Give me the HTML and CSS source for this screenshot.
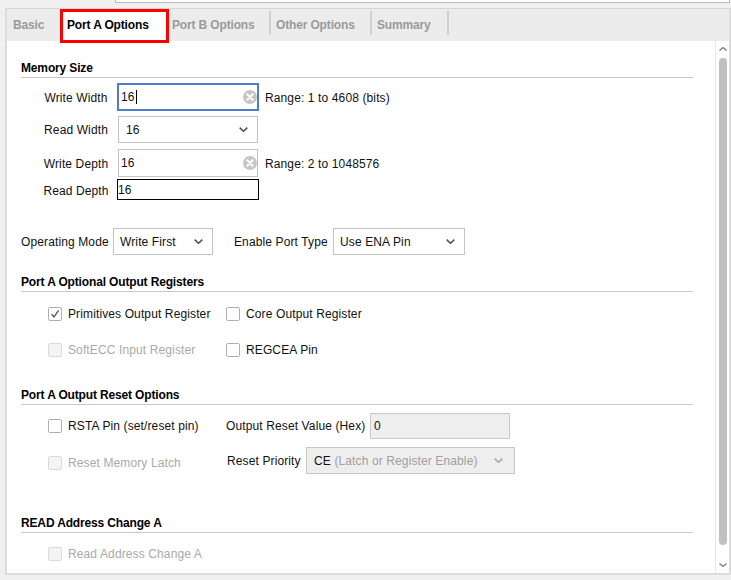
FILE: index.html
```html
<!DOCTYPE html>
<html>
<head>
<meta charset="utf-8">
<link rel="stylesheet" href="styles.css">
</head>
<body>
<div class="topstrip"></div>
<div class="panel">
  <div class="tabbar">
    <div class="tab tab-basic">Basic</div>
    <div class="tab tab-active">Port A Options</div>
    <div class="tab tab-b">Port B Options</div>
    <span class="sep"></span>
    <div class="tab tab-other">Other Options</div>
    <span class="sep"></span>
    <div class="tab tab-summary">Summary</div>
    <span class="sep"></span>
  </div>
  <div class="body">
    <div class="content">
      <div class="section-title">Memory Size</div>

      <div class="mem-row r1">
        <span class="mem-label">Write Width</span>
        <div class="field focused"><span>16</span><span class="caret"></span>
          <svg class="clear" width="14" height="14" viewBox="0 0 14 14"><circle cx="7" cy="7" r="7" fill="#c6c6c6"/><path d="M4.3 4.3 L9.7 9.7 M9.7 4.3 L4.3 9.7" stroke="#fff" stroke-width="2" stroke-linecap="round"/></svg>
        </div>
        <span class="hint">Range: 1 to 4608 (bits)</span>
      </div>

      <div class="mem-row r2">
        <span class="mem-label">Read Width</span>
        <div class="select sel-mem"><span>16</span>
          <svg class="chev" width="9" height="5" viewBox="0 0 9 5"><path d="M0.7 0.7 L4.5 4.3 L8.3 0.7" fill="none" stroke="#555" stroke-width="1.6"/></svg>
        </div>
      </div>

      <div class="mem-row r3">
        <span class="mem-label">Write Depth</span>
        <div class="field"><span>16</span>
          <svg class="clear" width="14" height="14" viewBox="0 0 14 14"><circle cx="7" cy="7" r="7" fill="#c6c6c6"/><path d="M4.3 4.3 L9.7 9.7 M9.7 4.3 L4.3 9.7" stroke="#fff" stroke-width="2" stroke-linecap="round"/></svg>
        </div>
        <span class="hint">Range: 2 to 1048576</span>
      </div>

      <div class="mem-row r4">
        <span class="mem-label">Read Depth</span>
        <div class="field plain">16</div>
      </div>

      <div class="ops-row">
        <span class="ops-label1">Operating Mode</span>
        <div class="select sel-op"><span>Write First</span>
          <svg class="chev" width="9" height="5" viewBox="0 0 9 5"><path d="M0.7 0.7 L4.5 4.3 L8.3 0.7" fill="none" stroke="#555" stroke-width="1.6"/></svg>
        </div>
        <span class="ops-label2">Enable Port Type</span>
        <div class="select sel-en"><span>Use ENA Pin</span>
          <svg class="chev" width="9" height="5" viewBox="0 0 9 5"><path d="M0.7 0.7 L4.5 4.3 L8.3 0.7" fill="none" stroke="#555" stroke-width="1.6"/></svg>
        </div>
      </div>

      <div class="section-title st2">Port A Optional Output Registers</div>
      <div class="check-grid">
        <label class="check"><span class="box checked"><svg width="12" height="12" viewBox="0 0 12 12"><path d="M2.6 6.2 L5 8.8 L9.6 2.4" fill="none" stroke="#5a5a5a" stroke-width="1.4"/></svg></span>Primitives Output Register</label>
        <label class="check"><span class="box"></span>Core Output Register</label>
        <label class="check disabled"><span class="box"></span>SoftECC Input Register</label>
        <label class="check"><span class="box"></span>REGCEA Pin</label>
      </div>

      <div class="section-title st3">Port A Output Reset Options</div>
      <div class="reset-grid">
        <label class="check"><span class="box"></span>RSTA Pin (set/reset pin)</label>
        <div class="inline">
          <span class="orv-label">Output Reset Value (Hex)</span>
          <div class="field dis-field">0</div>
        </div>
        <label class="check disabled shifted"><span class="box"></span>Reset Memory Latch</label>
        <div class="inline">
          <span class="prio-label">Reset Priority</span>
          <div class="select sel-prio"><span>CE <span class="muted">(Latch or Register Enable)</span></span>
            <svg class="chev" width="9" height="5" viewBox="0 0 9 5"><path d="M0.7 0.7 L4.5 4.3 L8.3 0.7" fill="none" stroke="#a8a8a8" stroke-width="1.6"/></svg>
          </div>
        </div>
      </div>

      <div class="section-title st4">READ Address Change A</div>
      <div class="last-row">
        <label class="check disabled"><span class="box"></span>Read Address Change A</label>
      </div>
    </div>
    <div class="scrollbar">
      <svg width="8" height="4" viewBox="0 0 8 4"><path d="M0.5 3.5 L4 0.5 L7.5 3.5" fill="none" stroke="#777" stroke-width="1.2"/></svg>
      <div class="thumb"></div>
      <svg width="8" height="4" viewBox="0 0 8 4"><path d="M0.5 0.5 L4 3.5 L7.5 0.5" fill="none" stroke="#777" stroke-width="1.2"/></svg>
    </div>
  </div>
</div>
</body>
</html>
```

FILE: styles.css
```css
* { box-sizing: border-box; }
html, body {
  margin: 0;
  padding: 0;
  background: #f0f0f0;
  font-family: "Liberation Sans", Arial, sans-serif;
  font-size: 12px;
  letter-spacing: 0.12px;
  color: #111;
}
.topstrip {
  margin-left: 115px;
  width: 615px;
  height: 3px;
  background: #fff;
  border: 1px solid #bcbcbc;
  border-top: none;
}
.panel {
  margin: 5px 0 0 5px;
  border: 2px solid #dcdcdc;
  border-top: 1px solid #d6d6d6;
}
.tabbar {
  height: 32px;
  background: #ececec;
  display: flex;
  align-items: flex-start;
}
.tab {
  height: 32px;
  padding-top: 8px;
  line-height: 16px;
  font-weight: bold;
  letter-spacing: -0.15px;
  color: #9a9a9a;
  white-space: nowrap;
}
.tab-basic { width: 53px; padding-left: 6px; }
.tab-active {
  position: relative;
  z-index: 1;
  width: 109px;
  height: 34px;
  padding-top: 5px;
  padding-left: 4px;
  border: 3px solid #ff0000;
  background: #fff;
  color: #000;
}
.tab-b { width: 100px; padding-left: 3px; }
.tab-other { width: 99px; padding-left: 5px; }
.tab-summary { width: 75px; padding-left: 5px; }
.sep {
  width: 2px;
  height: 24px;
  margin-top: 2px;
  background: #d0d0d0;
}
.body {
  display: flex;
  height: 532px;
  background: #fff;
}
.content {
  flex: 1;
  padding: 18px 22px 0 14px;
  overflow: hidden;
}
.section-title {
  font-weight: bold;
  letter-spacing: -0.15px;
  color: #000;
  line-height: 16px;
  padding-top: 1px;
  padding-bottom: 1px;
  border-bottom: 1px solid #c8c8c8;
}
.mem-row {
  display: flex;
  align-items: center;
}
.r1 { margin-top: 5px; height: 28px; }
.r2 { margin-top: 5px; height: 27px; }
.r3 { margin-top: 6px; height: 28px; }
.r4 { margin-top: 2px; height: 21px; }
.r1 .mem-label, .r3 .mem-label { padding-top: 2px; }
.r4 .mem-label { padding-top: 3px; }
.mem-label {
  width: 72px;
  margin-left: 19px;
  text-align: center;
  white-space: nowrap;
}
.field, .select {
  display: flex;
  align-items: center;
  border: 1px solid #c4c4c4;
  background: #fff;
  white-space: nowrap;
}
.field {
  width: 140px;
  height: 28px;
  margin-left: 6px;
  padding-left: 2px;
}
.field.focused {
  width: 142px;
  margin-left: 5px;
  margin-right: -1px;
  border: 2px solid #4d7dcc;
  padding-left: 2px;
}
.field.plain {
  width: 142px;
  height: 21px;
  margin-left: 5px;
  border: 1px solid #000;
  padding-left: 0;
}
.caret {
  width: 1px;
  height: 14px;
  background: #000;
  margin-left: 1px;
}
.clear {
  margin-left: auto;
  margin-right: 0;
}
.hint { margin-left: 7px; white-space: nowrap; padding-top: 2px; }
.select { height: 27px; }
.chev { margin-left: auto; margin-right: 9px; }
.sel-mem { width: 140px; margin-left: 6px; padding-left: 7px; }
.ops-row {
  margin-top: 28px;
  height: 27px;
  display: flex;
  align-items: center;
  white-space: nowrap;
}
.ops-label1 { width: 86px; }
.sel-op { width: 100px; margin-left: 6px; padding-left: 6px; }
.ops-label2 { margin-left: 21px; width: 93px; }
.sel-en { width: 132px; margin-left: 6px; padding-left: 6px; }

.st2 { margin-top: 18px; }
.check-grid {
  margin: 15px 0 0 27px;
  display: grid;
  grid-template-columns: 178px auto;
  grid-auto-rows: 14px;
  row-gap: 22px;
}
.check {
  display: flex;
  align-items: center;
  gap: 6px;
  white-space: nowrap;
  color: #111;
}
.box {
  width: 14px;
  height: 14px;
  border: 1px solid #b0b0b0;
  border-radius: 2px;
  background: #fff;
  display: flex;
  align-items: center;
  justify-content: center;
  flex: none;
}
.check.disabled { color: #a9a9a9; }
.check.disabled .box {
  border-color: #dadada;
  background: #f4f4f4;
}

.st3 { margin-top: 29px; }
.reset-grid {
  margin: 8px 0 0 27px;
  display: grid;
  grid-template-columns: 178px auto;
  grid-template-rows: 26px 27px;
  row-gap: 8px;
  align-items: center;
}
.shifted { padding-top: 5px; }
.inline {
  display: flex;
  align-items: center;
  white-space: nowrap;
}
.orv-label { width: 138px; }
.dis-field {
  width: 140px;
  height: 26px;
  margin-left: 6px;
  padding-left: 3px;
  background: #eeeeee;
  border-color: #c8c8c8;
}
.prio-label { margin-left: 1px; width: 72px; }
.sel-prio {
  width: 209px;
  margin-left: 7px;
  padding-left: 7px;
  background: #eeeeee;
  border-color: #c8c8c8;
}
.sel-prio .chev { margin-right: 11px; }
.muted { color: #a0a0a0; }

.st4 { margin-top: 40px; }
.last-row { margin: 14px 0 0 27px; }

.scrollbar {
  width: 14px;
  border-left: 1px solid #e6e6e6;
  background: #fff;
  display: flex;
  flex-direction: column;
  align-items: center;
  padding: 6px 0;
}
.scrollbar svg { flex: none; }
.thumb {
  flex: 1;
  width: 8px;
  margin: 7px 0 18px;
  border-radius: 4px;
  background: #c0c0c0;
}
```
